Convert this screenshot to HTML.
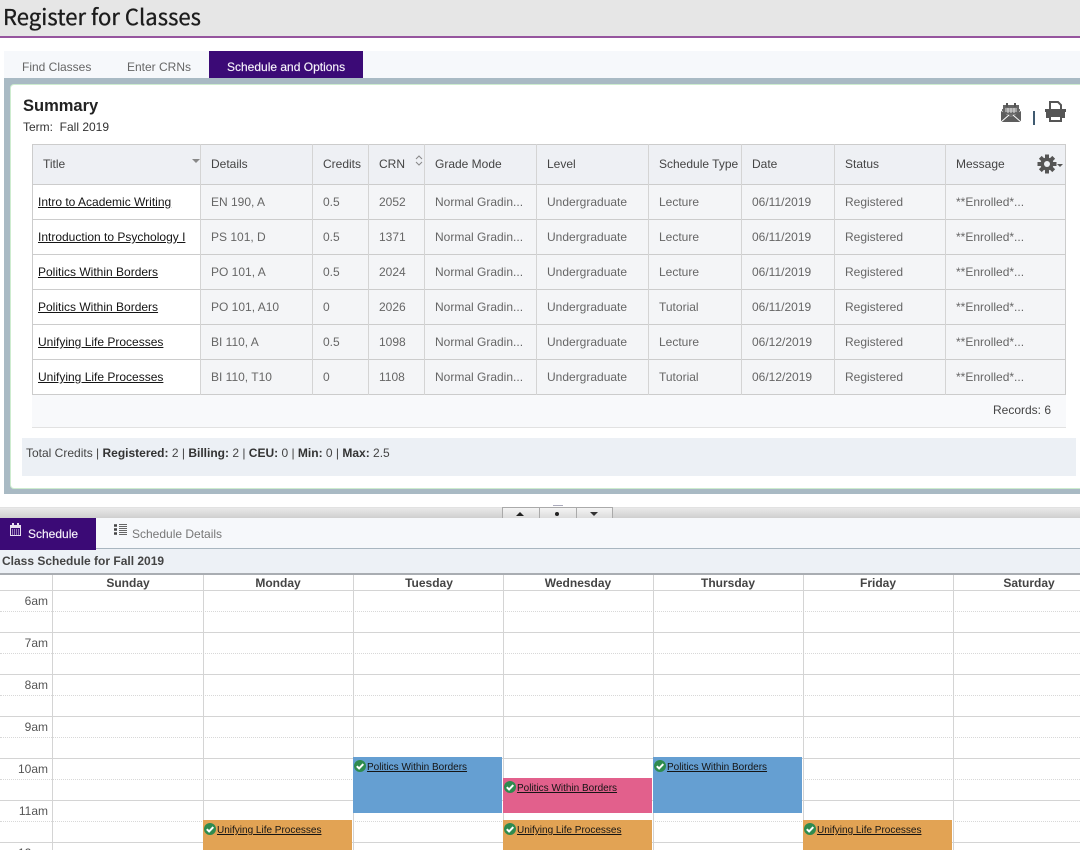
<!DOCTYPE html>
<html><head><meta charset="utf-8"><title>Register for Classes</title>
<style>
*{box-sizing:border-box}
html,body{margin:0;padding:0;background:#fff;width:1080px;height:851px;overflow:hidden}
body{position:relative;font-family:"Liberation Sans",sans-serif;font-size:12px;color:#333}
#w{position:absolute;left:0;top:0;width:1080px;height:851px;overflow:hidden}
.a{position:absolute}
.t{position:absolute;white-space:nowrap;line-height:14px}
.h{color:#444}
.c{color:#666}
.l{color:#151515;text-decoration:underline}
.vl{position:absolute;width:1px;background:#d4d4d4}
.hl{position:absolute;height:1px;background:#d4d4d4}
.ev{position:absolute}
.ev svg{position:absolute;left:1px;top:3px}
.ev a{position:absolute;left:14px;top:5px;font-size:10px;line-height:12px;color:#151515;text-decoration:underline;white-space:nowrap}
.day{position:absolute;top:576px;font-weight:bold;color:#444;text-align:center;width:150px;line-height:14px}
.hr{position:absolute;left:0;width:48px;text-align:right;color:#555;line-height:14px}
.dot{position:absolute;left:0;width:1080px;height:0;border-top:1px dotted #d8d8d8}
</style></head><body><div id="w">

<div class="a" style="left:0;top:0;width:1080px;height:36px;background:#e6e6e6"></div>
<div class="a" style="left:0;top:36px;width:1080px;height:2px;background:#96559e"></div>
<div class="t" style="left:3px;top:1px;font:22px/30px 'Noto Sans CJK JP','Liberation Sans',sans-serif;color:#1c1c1c;-webkit-text-stroke:.35px #1c1c1c;letter-spacing:.05px">Register for Classes</div>

<div class="a" style="left:4px;top:51px;width:1076px;height:27px;background:#f6f8fb"></div>
<div class="t" style="left:22px;top:60px;color:#666">Find Classes</div>
<div class="t" style="left:127px;top:60px;color:#666">Enter CRNs</div>
<div class="a" style="left:209px;top:51px;width:154px;height:27px;background:#3b0a76"></div>
<div class="t" style="left:227px;top:60px;color:#f7f3fb;-webkit-text-stroke:.15px #f7f3fb">Schedule and Options</div>

<div class="a" style="left:4px;top:78px;width:1076px;height:416px;background:#a9bac4"></div>
<div class="a" style="left:10px;top:84px;width:1070px;height:405px;background:#fff;border:1px solid #cdeccf;border-right:0;border-radius:4px 0 0 4px"></div>

<div class="t" style="left:23px;top:97px;font-size:16.5px;font-weight:bold;line-height:18px;color:#222">Summary</div>
<div class="t" style="left:23px;top:120px;color:#333">Term:&nbsp; Fall 2019</div>

<svg class="a" style="left:1000px;top:102px" width="22" height="21" viewBox="0 0 22 21"><path d="M2 7h18v2l-9 6-9-6z" fill="#6f6f6f"/><rect x="3" y="3" width="16" height="9" fill="#666"/><rect x="6" y="1" width="2" height="4" fill="#555"/><rect x="14" y="1" width="2" height="4" fill="#555"/><path d="M5 7h12M5 9h12M8 6v5M11 6v5M14 6v5" stroke="#ddd" stroke-width="1"/><path d="M1 9l10 6 10-6v11H1z" fill="#5d5d5d"/><path d="M1 20l8-7M21 20l-8-7" stroke="#fff" stroke-width="1"/></svg>
<div class="a" style="left:1033px;top:111px;width:2px;height:14px;background:#3f5a70"></div>
<svg class="a" style="left:1045px;top:101px" width="21" height="22" viewBox="0 0 21 22"><path d="M5 1h8l3 3v5H5z" fill="none" stroke="#555" stroke-width="2"/><path d="M1 9h19v8h-3v-3H4v3H1z" fill="#555"/><rect x="0" y="8" width="21" height="3" fill="#555"/><path d="M5 15h11v5H5z" fill="none" stroke="#555" stroke-width="2"/></svg>

<!-- table -->
<div class="a" style="left:32px;top:144px;width:1034px;height:41px;background:#eef0f4"></div>
<div class="a" style="left:200px;top:185px;width:866px;height:210px;background:#f4f5f7"></div>
<div class="a" style="left:32px;top:395px;width:1034px;height:33px;background:#f8f9fb"></div>
<div class="hl" style="left:32px;top:144px;width:1034px;background:#ccc"></div>
<div class="hl" style="left:32px;top:184px;width:1034px;background:#ccc"></div>
<div class="hl" style="left:32px;top:219px;width:1034px;background:#ccc"></div>
<div class="hl" style="left:32px;top:254px;width:1034px;background:#ccc"></div>
<div class="hl" style="left:32px;top:289px;width:1034px;background:#ccc"></div>
<div class="hl" style="left:32px;top:324px;width:1034px;background:#ccc"></div>
<div class="hl" style="left:32px;top:359px;width:1034px;background:#ccc"></div>
<div class="hl" style="left:32px;top:394px;width:1034px;background:#ccc"></div>
<div class="hl" style="left:32px;top:427px;width:1034px;background:#e2e2e2"></div>
<div class="vl" style="left:32px;top:144px;height:251px;background:#ccc"></div>
<div class="vl" style="left:200px;top:144px;height:251px"></div>
<div class="vl" style="left:312px;top:144px;height:251px"></div>
<div class="vl" style="left:368px;top:144px;height:251px"></div>
<div class="vl" style="left:424px;top:144px;height:251px"></div>
<div class="vl" style="left:536px;top:144px;height:251px"></div>
<div class="vl" style="left:648px;top:144px;height:251px"></div>
<div class="vl" style="left:741px;top:144px;height:251px"></div>
<div class="vl" style="left:834px;top:144px;height:251px"></div>
<div class="vl" style="left:945px;top:144px;height:251px"></div>
<div class="vl" style="left:1065px;top:144px;height:251px;background:#ccc"></div>

<div class="t h" style="left:43px;top:157px">Title</div>
<div class="a" style="left:192px;top:159px;width:0;height:0;border:4px solid transparent;border-top:4px solid #888;border-bottom:0"></div>
<div class="t h" style="left:211px;top:157px">Details</div>
<div class="t h" style="left:323px;top:157px">Credits</div>
<div class="t h" style="left:379px;top:157px">CRN</div>
<svg class="a" style="left:415px;top:155px" width="8" height="12" viewBox="0 0 8 12"><path d="M1 4l3-3 3 3M1 7l3 3 3-3" fill="none" stroke="#888" stroke-width="1"/></svg>
<div class="t h" style="left:435px;top:157px">Grade Mode</div>
<div class="t h" style="left:547px;top:157px">Level</div>
<div class="t h" style="left:659px;top:157px">Schedule Type</div>
<div class="t h" style="left:752px;top:157px">Date</div>
<div class="t h" style="left:845px;top:157px">Status</div>
<div class="t h" style="left:956px;top:157px">Message</div>
<svg class="a" style="left:1037px;top:154px" width="26" height="20" viewBox="0 0 26 20"><g transform="translate(10 10)" fill="#555"><circle r="6.5"/><rect x="-2" y="-9.5" width="4" height="19"/><rect x="-2" y="-9.5" width="4" height="19" transform="rotate(45)"/><rect x="-2" y="-9.5" width="4" height="19" transform="rotate(90)"/><rect x="-2" y="-9.5" width="4" height="19" transform="rotate(135)"/><circle r="3" fill="#eef0f4"/></g><path d="M20 10h6l-3 3z" fill="#555"/></svg>

<!-- row 1 -->
<div class="t l" style="left:38px;top:195px">Intro to Academic Writing</div>
<div class="t c" style="left:211px;top:195px">EN 190, A</div><div class="t c" style="left:323px;top:195px">0.5</div><div class="t c" style="left:379px;top:195px">2052</div><div class="t c" style="left:435px;top:195px">Normal Gradin...</div><div class="t c" style="left:547px;top:195px">Undergraduate</div><div class="t c" style="left:659px;top:195px">Lecture</div><div class="t c" style="left:752px;top:195px">06/11/2019</div><div class="t c" style="left:845px;top:195px">Registered</div><div class="t c" style="left:956px;top:195px">**Enrolled*...</div>
<!-- row 2 -->
<div class="t l" style="left:38px;top:230px">Introduction to Psychology I</div>
<div class="t c" style="left:211px;top:230px">PS 101, D</div><div class="t c" style="left:323px;top:230px">0.5</div><div class="t c" style="left:379px;top:230px">1371</div><div class="t c" style="left:435px;top:230px">Normal Gradin...</div><div class="t c" style="left:547px;top:230px">Undergraduate</div><div class="t c" style="left:659px;top:230px">Lecture</div><div class="t c" style="left:752px;top:230px">06/11/2019</div><div class="t c" style="left:845px;top:230px">Registered</div><div class="t c" style="left:956px;top:230px">**Enrolled*...</div>
<!-- row 3 -->
<div class="t l" style="left:38px;top:265px">Politics Within Borders</div>
<div class="t c" style="left:211px;top:265px">PO 101, A</div><div class="t c" style="left:323px;top:265px">0.5</div><div class="t c" style="left:379px;top:265px">2024</div><div class="t c" style="left:435px;top:265px">Normal Gradin...</div><div class="t c" style="left:547px;top:265px">Undergraduate</div><div class="t c" style="left:659px;top:265px">Lecture</div><div class="t c" style="left:752px;top:265px">06/11/2019</div><div class="t c" style="left:845px;top:265px">Registered</div><div class="t c" style="left:956px;top:265px">**Enrolled*...</div>
<!-- row 4 -->
<div class="t l" style="left:38px;top:300px">Politics Within Borders</div>
<div class="t c" style="left:211px;top:300px">PO 101, A10</div><div class="t c" style="left:323px;top:300px">0</div><div class="t c" style="left:379px;top:300px">2026</div><div class="t c" style="left:435px;top:300px">Normal Gradin...</div><div class="t c" style="left:547px;top:300px">Undergraduate</div><div class="t c" style="left:659px;top:300px">Tutorial</div><div class="t c" style="left:752px;top:300px">06/11/2019</div><div class="t c" style="left:845px;top:300px">Registered</div><div class="t c" style="left:956px;top:300px">**Enrolled*...</div>
<!-- row 5 -->
<div class="t l" style="left:38px;top:335px">Unifying Life Processes</div>
<div class="t c" style="left:211px;top:335px">BI 110, A</div><div class="t c" style="left:323px;top:335px">0.5</div><div class="t c" style="left:379px;top:335px">1098</div><div class="t c" style="left:435px;top:335px">Normal Gradin...</div><div class="t c" style="left:547px;top:335px">Undergraduate</div><div class="t c" style="left:659px;top:335px">Lecture</div><div class="t c" style="left:752px;top:335px">06/12/2019</div><div class="t c" style="left:845px;top:335px">Registered</div><div class="t c" style="left:956px;top:335px">**Enrolled*...</div>
<!-- row 6 -->
<div class="t l" style="left:38px;top:370px">Unifying Life Processes</div>
<div class="t c" style="left:211px;top:370px">BI 110, T10</div><div class="t c" style="left:323px;top:370px">0</div><div class="t c" style="left:379px;top:370px">1108</div><div class="t c" style="left:435px;top:370px">Normal Gradin...</div><div class="t c" style="left:547px;top:370px">Undergraduate</div><div class="t c" style="left:659px;top:370px">Tutorial</div><div class="t c" style="left:752px;top:370px">06/12/2019</div><div class="t c" style="left:845px;top:370px">Registered</div><div class="t c" style="left:956px;top:370px">**Enrolled*...</div>

<div class="t" style="left:993px;top:403px;color:#444">Records: 6</div>

<div class="a" style="left:22px;top:438px;width:1054px;height:38px;background:#ecf0f5"></div>
<div class="t" style="left:26px;top:446px;color:#444">Total Credits | <b style="color:#333">Registered:</b> 2 | <b style="color:#333">Billing:</b> 2 | <b style="color:#333">CEU:</b> 0 | <b style="color:#333">Min:</b> 0 | <b style="color:#333">Max:</b> 2.5</div>

<!-- splitter -->
<div class="a" style="left:0;top:507px;width:1080px;height:11px;background:linear-gradient(#e9e9e9,#cfcfcf);border-top:1px solid #e2e2e2"></div>
<div class="a" style="left:553px;top:505px;width:10px;height:1px;background:#aab"></div>
<div class="a" style="left:502px;top:507px;width:111px;height:11px;background:linear-gradient(#f4f4f4,#dcdcdc);border:1px solid #aaa;border-bottom:0"></div>
<div class="a" style="left:539px;top:507px;width:1px;height:11px;background:#aaa"></div>
<div class="a" style="left:576px;top:507px;width:1px;height:11px;background:#aaa"></div>
<div class="a" style="left:516px;top:512px;width:0;height:0;border:4px solid transparent;border-bottom:4px solid #222;border-top:0"></div>
<div class="a" style="left:555px;top:512px;width:4px;height:4px;border-radius:50%;background:#222"></div>
<div class="a" style="left:590px;top:512px;width:0;height:0;border:4px solid transparent;border-top:4px solid #333;border-bottom:0"></div>

<!-- lower tabs -->
<div class="a" style="left:0;top:518px;width:1080px;height:31px;background:#f6f8fb"></div>
<div class="a" style="left:0;top:548px;width:1080px;height:1px;background:#a9b6c0"></div>
<div class="a" style="left:0;top:549px;width:1080px;height:24px;background:#edf1f6"></div>
<div class="a" style="left:0;top:518px;width:96px;height:32px;background:#3b0a76"></div>
<svg class="a" style="left:10px;top:523px" width="11" height="13" viewBox="0 0 11 13"><path d="M.5 2.5h10v10H.5z" fill="none" stroke="#e8e0f0"/><rect x="0" y="2" width="11" height="3" fill="#e8e0f0"/><rect x="2" y="0" width="2" height="3" fill="#e8e0f0"/><rect x="7" y="0" width="2" height="3" fill="#e8e0f0"/><path d="M2 7h7M2 9h7M2 11h7" stroke="#e8e0f0" stroke-dasharray="1 1"/></svg>
<div class="t" style="left:28px;top:527px;color:#f7f3fb;-webkit-text-stroke:.15px #f7f3fb">Schedule</div>
<svg class="a" style="left:114px;top:524px" width="13" height="11" viewBox="0 0 13 11"><path d="M0 1.5h3M0 5.5h3M0 9.5h3" stroke="#444" stroke-width="2.4"/><path d="M5 .5h8M5 2.5h8M5 4.5h8M5 6.5h8M5 8.5h8M5 10.5h8" stroke="#666"/></svg>
<div class="t" style="left:132px;top:527px;color:#777">Schedule Details</div>

<div class="a" style="left:0;top:573px;width:1080px;height:2px;background:#a9adb2"></div>
<div class="t" style="left:2px;top:554px;font-weight:bold;color:#444">Class Schedule for Fall 2019</div>

<!-- calendar grid -->
<div class="hl" style="left:0;top:590px;width:1080px"></div>
<div class="dot" style="top:611px"></div>
<div class="hl" style="left:0;top:632px;width:1080px"></div>
<div class="dot" style="top:653px"></div>
<div class="hl" style="left:0;top:674px;width:1080px"></div>
<div class="dot" style="top:695px"></div>
<div class="hl" style="left:0;top:716px;width:1080px"></div>
<div class="dot" style="top:737px"></div>
<div class="hl" style="left:0;top:758px;width:1080px"></div>
<div class="dot" style="top:779px"></div>
<div class="hl" style="left:0;top:800px;width:1080px"></div>
<div class="dot" style="top:821px"></div>
<div class="hl" style="left:0;top:842px;width:1080px"></div>
<div class="vl" style="left:52px;top:575px;height:276px"></div>
<div class="vl" style="left:203px;top:575px;height:276px"></div>
<div class="vl" style="left:353px;top:575px;height:276px"></div>
<div class="vl" style="left:503px;top:575px;height:276px"></div>
<div class="vl" style="left:653px;top:575px;height:276px"></div>
<div class="vl" style="left:803px;top:575px;height:276px"></div>
<div class="vl" style="left:953px;top:575px;height:276px"></div>

<div class="day" style="left:53px">Sunday</div>
<div class="day" style="left:203px">Monday</div>
<div class="day" style="left:354px">Tuesday</div>
<div class="day" style="left:503px">Wednesday</div>
<div class="day" style="left:653px">Thursday</div>
<div class="day" style="left:803px">Friday</div>
<div class="day" style="left:954px">Saturday</div>

<div class="hr" style="top:594px">6am</div>
<div class="hr" style="top:636px">7am</div>
<div class="hr" style="top:678px">8am</div>
<div class="hr" style="top:720px">9am</div>
<div class="hr" style="top:762px">10am</div>
<div class="hr" style="top:804px">11am</div>
<div class="hr" style="top:846px">12pm</div>

<!-- events -->
<div class="ev" style="left:353px;top:757px;width:149px;height:56px;background:#659fd2"><svg width="12" height="12" viewBox="0 0 12 12"><circle cx="6" cy="6" r="6" fill="#2e8b4f"/><path d="M2.8 6.2l2.3 2.3 4.2-4.4" fill="none" stroke="#fff" stroke-width="2"/></svg><a>Politics Within Borders</a></div>
<div class="ev" style="left:653px;top:757px;width:149px;height:56px;background:#659fd2"><svg width="12" height="12" viewBox="0 0 12 12"><circle cx="6" cy="6" r="6" fill="#2e8b4f"/><path d="M2.8 6.2l2.3 2.3 4.2-4.4" fill="none" stroke="#fff" stroke-width="2"/></svg><a>Politics Within Borders</a></div>
<div class="ev" style="left:503px;top:778px;width:149px;height:35px;background:#e2608c"><svg width="12" height="12" viewBox="0 0 12 12"><circle cx="6" cy="6" r="6" fill="#2e8b4f"/><path d="M2.8 6.2l2.3 2.3 4.2-4.4" fill="none" stroke="#fff" stroke-width="2"/></svg><a>Politics Within Borders</a></div>
<div class="ev" style="left:203px;top:820px;width:149px;height:30px;background:#e2a354"><svg width="12" height="12" viewBox="0 0 12 12"><circle cx="6" cy="6" r="6" fill="#2e8b4f"/><path d="M2.8 6.2l2.3 2.3 4.2-4.4" fill="none" stroke="#fff" stroke-width="2"/></svg><a>Unifying Life Processes</a></div>
<div class="ev" style="left:503px;top:820px;width:149px;height:30px;background:#e2a354"><svg width="12" height="12" viewBox="0 0 12 12"><circle cx="6" cy="6" r="6" fill="#2e8b4f"/><path d="M2.8 6.2l2.3 2.3 4.2-4.4" fill="none" stroke="#fff" stroke-width="2"/></svg><a>Unifying Life Processes</a></div>
<div class="ev" style="left:803px;top:820px;width:149px;height:30px;background:#e2a354"><svg width="12" height="12" viewBox="0 0 12 12"><circle cx="6" cy="6" r="6" fill="#2e8b4f"/><path d="M2.8 6.2l2.3 2.3 4.2-4.4" fill="none" stroke="#fff" stroke-width="2"/></svg><a>Unifying Life Processes</a></div>
<div class="a" style="left:0;top:850px;width:1080px;height:1px;background:#fff"></div>
</div></body></html>
